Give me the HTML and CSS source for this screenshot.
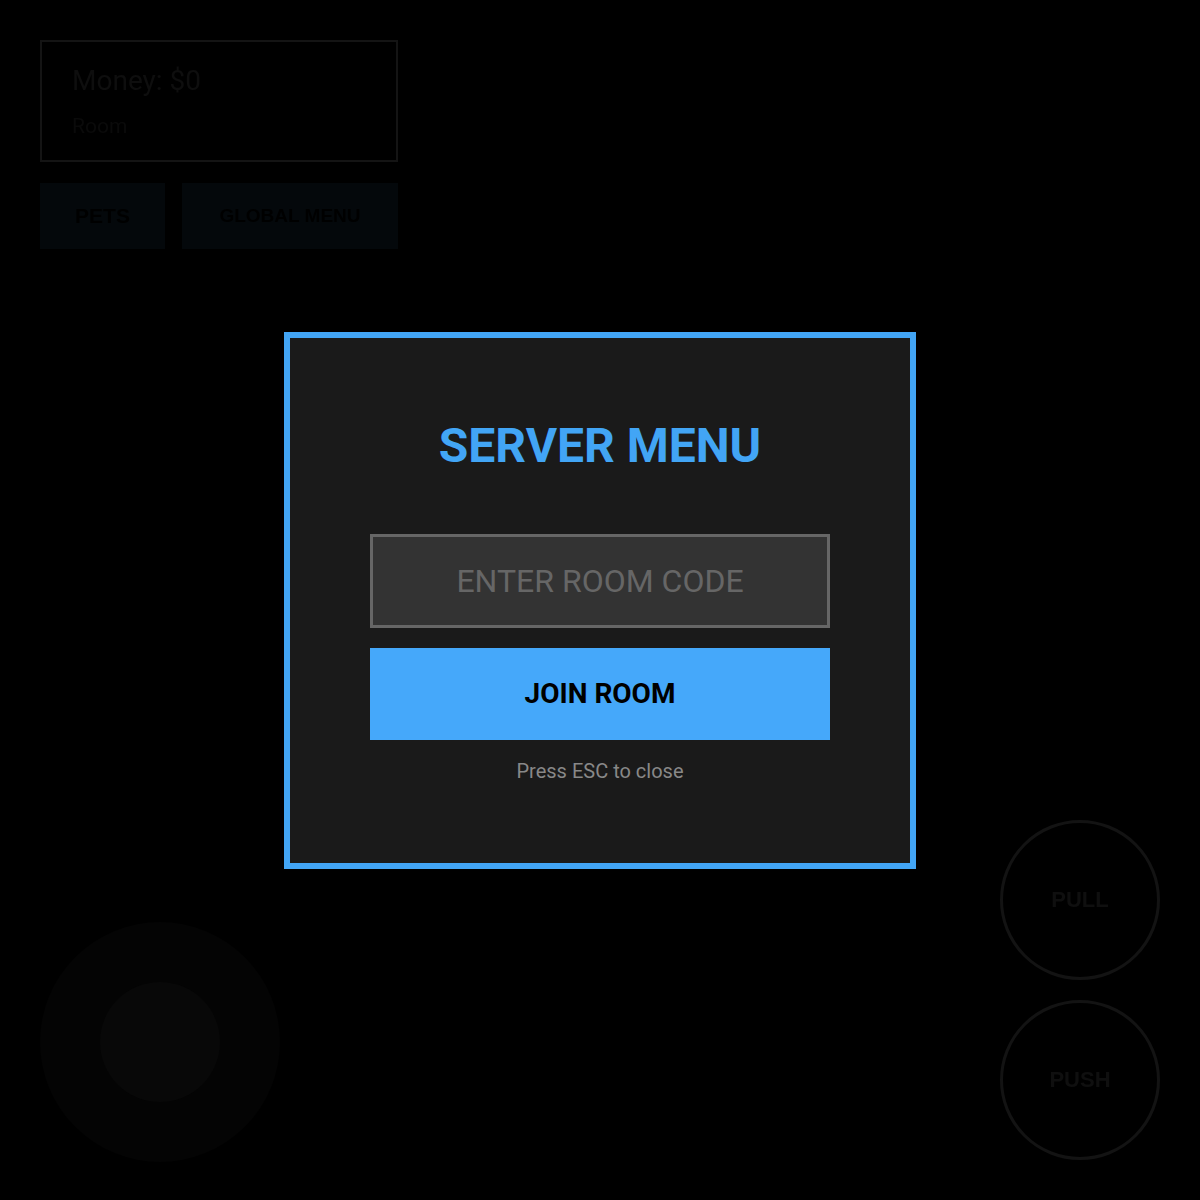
FILE: index.html
```html
<!DOCTYPE html>
<html>
<head>
  <meta charset="utf-8">
  <link rel="stylesheet" href="styles.css">
</head>
<body>
  <div class="hud-top">
    <div class="stats">
      <div class="money">Money: $0</div>
      <div class="room">Room</div>
    </div>
    <div class="hud-buttons">
      <button class="hud-btn pets">PETS</button>
      <button class="hud-btn global">GLOBAL MENU</button>
    </div>
  </div>

  <div class="joystick">
    <div class="joystick-knob"></div>
  </div>

  <div class="actions">
    <button class="action-btn">PULL</button>
    <button class="action-btn">PUSH</button>
  </div>

  <div class="overlay">
    <div class="modal">
      <h1 class="modal-title">SERVER MENU</h1>
      <input type="text" class="room-input" placeholder="ENTER ROOM CODE">
      <button class="join-btn">JOIN ROOM</button>
      <div class="hint">Press ESC to close</div>
    </div>
  </div>
</body>
</html>
```

FILE: styles.css
```css
body {
  margin: 0;
  width: 1200px;
  height: 1200px;
  background: #000;
  font-family: Roboto, "Liberation Sans", sans-serif;
  overflow: hidden;
}

.hud-top {
  position: fixed;
  top: 40px;
  left: 40px;
  display: flex;
  flex-direction: column;
  gap: 21px;
}

.stats {
  width: 358px;
  height: 122px;
  box-sizing: border-box;
  border: 2px solid #141414;
  padding: 22px 30px;
}

.money {
  font-size: 28px;
  color: #0e0e0e;
}

.room {
  margin-top: 17px;
  font-size: 21px;
  color: #0a0a0a;
}

.hud-buttons {
  display: flex;
  gap: 17px;
}

.hud-btn {
  height: 66px;
  padding: 0;
  border: none;
  background: #04080b;
  color: #000;
  font-family: "Liberation Sans", Arial, sans-serif;
  font-weight: bold;
  font-size: 21px;
}

.pets {
  width: 125px;
}

.global {
  width: 216px;
  font-size: 19px;
}

.joystick {
  position: fixed;
  left: 40px;
  bottom: 38px;
  width: 240px;
  height: 240px;
  border-radius: 50%;
  background: #040404;
  display: flex;
  align-items: center;
  justify-content: center;
}

.joystick-knob {
  width: 120px;
  height: 120px;
  border-radius: 50%;
  background: #080808;
}

.actions {
  position: fixed;
  right: 40px;
  bottom: 40px;
  display: flex;
  flex-direction: column;
  gap: 20px;
}

.action-btn {
  width: 160px;
  height: 160px;
  border-radius: 50%;
  border: 3px solid #131313;
  background: transparent;
  color: #0f0f0f;
  font-family: "Liberation Sans", Arial, sans-serif;
  font-weight: bold;
  font-size: 22px;
}

.overlay {
  position: fixed;
  inset: 0;
  display: flex;
  align-items: center;
  justify-content: center;
}

.modal {
  width: 632px;
  box-sizing: border-box;
  background: #1a1a1a;
  border: 6px solid #42a5f5;
  padding: 80px;
  display: flex;
  flex-direction: column;
  align-items: center;
}

.modal-title {
  margin: 0 0 60px;
  font-size: 48px;
  font-weight: bold;
  line-height: 56px;
  color: #42a5f5;
}

.room-input {
  width: 100%;
  height: 94px;
  box-sizing: border-box;
  background: #333;
  border: 3px solid #666;
  color: #ddd;
  font-family: Roboto, sans-serif;
  font-size: 32px;
  text-align: center;
  outline: none;
}

.room-input::placeholder {
  color: #666;
}

.join-btn {
  width: 100%;
  height: 92px;
  margin-top: 20px;
  border: none;
  background: #45a8fa;
  color: #000;
  font-family: Roboto, sans-serif;
  font-weight: bold;
  font-size: 28px;
}

.hint {
  margin-top: 20px;
  font-size: 20px;
  line-height: 23px;
  color: #888;
}
```
